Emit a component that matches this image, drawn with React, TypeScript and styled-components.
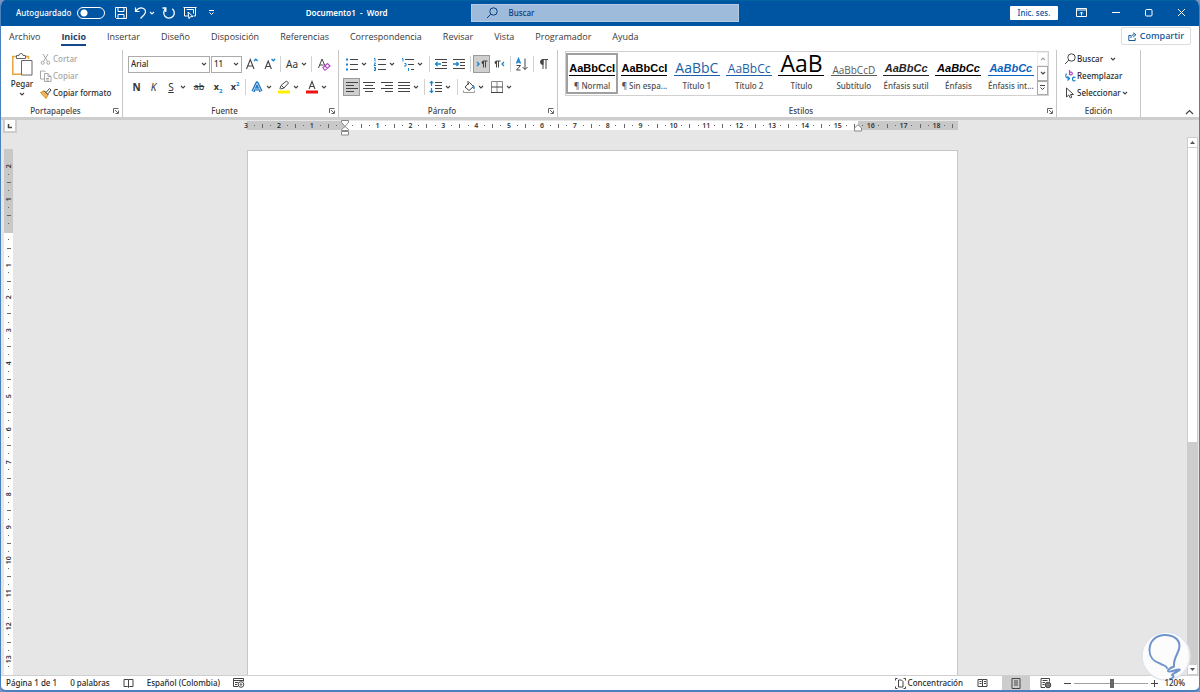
import React from "react";
import styled, { createGlobalStyle, css } from "styled-components";

const BLUE = "#0055a2";
const ACCENT = "#1583d0";
const INK = "#444444";

const GlobalStyle = createGlobalStyle`
  *, *::before, *::after { box-sizing: border-box; }
  body { margin: 0; background: #7f93c2; }
  button, input, select {
    font: inherit;
    color: inherit;
    margin: 0;
    padding: 0;
    border: 0;
    background: none;
    border-radius: 0;
    appearance: none;
  }
  svg { display: block; flex: none; }
`;

const Window = styled.div`
  display: flex;
  flex-direction: column;
  height: 100vh;
  border: 1px solid #4a80bd;
  border-top: 0;
  border-bottom-width: 2px;
  border-radius: 6px;
  overflow: hidden;
  background: #ffffff;
  color: #2b2b2b;
  font-family: "Noto Sans", "Open Sans", sans-serif;
  font-size: 8px;
  line-height: 12px;
  font-weight: 500;
  white-space: nowrap;
`;

/* ---------- title bar ---------- */

const TitleBar = styled.header`
  flex: none;
  display: grid;
  grid-template-columns: 471fr 268px 460fr;
  align-items: center;
  height: 26px;
  padding-bottom: 1px;
  background: ${BLUE};
  box-shadow: inset 0 1px #00629c;
  color: #ffffff;
`;

const QuickAccess = styled.div`
  display: flex;
  align-items: center;
  padding-left: 15px;
`;

const AutoSave = styled.label`
  display: flex;
  align-items: center;
  gap: 5px;
  width: 89px;
  margin-right: 9px;
`;

const Toggle = styled.input`
  width: 28px;
  height: 12px;
  margin-left: auto;
  border: 1px solid #ffffff;
  border-radius: 6px;
  background: radial-gradient(circle at 6px 5px, #ffffff 3px, transparent 4px);
`;

const BarButton = styled.button<{ $w: number }>`
  display: flex;
  align-items: center;
  justify-content: center;
  gap: 2px;
  width: ${(p) => p.$w}px;
  height: 20px;
`;

const DocTitle = styled.div`
  margin-left: auto;
  margin-right: 84px;
  font-weight: 600;
  white-space: pre;
`;

const SearchBox = styled.label`
  display: flex;
  align-items: center;
  gap: 10px;
  height: 18px;
  padding-left: 14px;
  border: 1px solid #b4cae3;
  background: #9fbbdb;
  color: #0a3c7c;
`;

const SearchInput = styled.input`
  flex: 1;
  min-width: 0;
  &::placeholder { color: #0a3c7c; opacity: 1; }
`;

const WindowControls = styled.div`
  display: flex;
  align-items: center;
  justify-content: flex-end;
`;

const SignIn = styled.button`
  width: 48px;
  height: 14px;
  margin-right: 7px;
  border-radius: 1px;
  background: #ffffff;
  color: ${BLUE};
`;

/* ---------- tabs ---------- */

const TabBar = styled.nav`
  flex: none;
  display: flex;
  align-items: flex-start;
  height: 23px;
  padding: 0 8px;
  font-family: "Open Sans", "Noto Sans", sans-serif;
  font-size: 9px;
  font-weight: 400;
`;

const TabList = styled.div`
  flex: 1;
  display: flex;
  gap: 21px;
  padding-top: 4px;
`;

const Tab = styled.button<{ $active?: boolean }>`
  height: 16px;
  line-height: 14px;
  border-bottom: 2px solid ${(p) => (p.$active ? "#124a8c" : "transparent")};
  font-weight: ${(p) => (p.$active ? 700 : 400)};
  color: ${(p) => (p.$active ? "#1f3f66" : "#383838")};
`;

const Share = styled.button`
  display: flex;
  align-items: center;
  justify-content: center;
  gap: 3px;
  width: 70px;
  height: 18px;
  margin-top: 1px;
  border: 1px solid #dcdcdc;
  border-radius: 2px;
  color: #175a9e;
  font-weight: 600;
`;

/* ---------- ribbon ---------- */

const Ribbon = styled.div`
  flex: none;
  display: flex;
  height: 71px;
  padding-top: 1px;
  border-bottom: 3px solid #cdcdcd;
`;

const Group = styled.section<{ $w: number; $pad?: number }>`
  display: flex;
  flex-direction: column;
  width: ${(p) => p.$w}px;
  height: 67px;
  padding-left: ${(p) => p.$pad ?? 0}px;
  border-right: 1px solid #c6c6c6;
`;

const GroupBody = styled.div`
  display: flex;
  flex-direction: column;
  flex: 1;
  gap: 5px;
  padding-top: 5px;
`;

const GroupFoot = styled.div<{ $pad?: number; $launcher: boolean }>`
  display: grid;
  grid-template-columns: 1fr ${(p) => (p.$launcher ? "12px" : "0")};
  align-items: center;
  height: 12px;
  margin-left: -${(p) => p.$pad ?? 0}px;
  text-align: center;
  color: ${INK};
`;

const LauncherButton = styled.button`
  justify-self: end;
  width: 10px;
`;

const Row = styled.div`
  display: flex;
  align-items: center;
  height: 18px;
`;

const Tool = styled.button<{ $w: number; $on?: boolean; $menu?: boolean }>`
  display: flex;
  align-items: center;
  justify-content: ${(p) => (p.$menu ? "flex-start" : "center")};
  gap: 2px;
  flex: none;
  width: ${(p) => p.$w}px;
  height: 18px;
  padding-left: ${(p) => (p.$menu ? 2 : 0)}px;
  color: #333333;
  ${(p) =>
    p.$on &&
    css`
      border: 1px solid #9a9a9a;
      background: #cfcfcf;
    `}
`;

const Glyph = styled.span<{ $bold?: boolean; $italic?: boolean; $line?: string; $size?: number }>`
  min-width: 14px;
  text-align: center;
  font-size: ${(p) => p.$size ?? 10}px;
  font-weight: ${(p) => (p.$bold ? 700 : 400)};
  font-style: ${(p) => (p.$italic ? "italic" : "normal")};
  text-decoration: ${(p) => p.$line ?? "none"};
  sub, sup { font-size: 6px; line-height: 0; color: ${ACCENT}; font-weight: 700; }
`;

const Divider = styled.span`
  flex: none;
  width: 1px;
  height: 16px;
  margin: 0 2px;
  background: #d2d2d2;
`;

const Combo = styled.label<{ $w: number }>`
  display: flex;
  align-items: center;
  width: ${(p) => p.$w}px;
  height: 17px;
  margin-right: 1px;
  padding: 0 2px;
  border: 1px solid #ababab;
`;

const ComboSelect = styled.select`
  flex: 1;
  min-width: 0;
`;

const PlainBody = styled.div`
  display: flex;
  flex: 1;
`;

const Paste = styled.button`
  display: flex;
  flex-direction: column;
  align-items: center;
  gap: 2px;
  width: 39px;
  padding: 3px 0 0 3px;
`;

const Stack = styled.div`
  display: flex;
  flex-direction: column;
  align-items: flex-start;
`;

const LineButton = styled.button<{ $off?: boolean }>`
  display: flex;
  align-items: center;
  gap: 1px;
  height: 17px;
  color: ${(p) => (p.$off ? "#a6a6a6" : "#2b2b2b")};
`;

const Gallery = styled.div`
  display: flex;
  width: 484px;
  height: 45px;
  margin-top: 1px;
  border: 1px solid #d0d0d0;
`;

const StyleGrid = styled.div`
  flex: 1;
  display: grid;
  grid-template-columns: repeat(9, 1fr);
`;

const StyleCard = styled.button<{ $on?: boolean }>`
  display: flex;
  flex-direction: column;
  align-items: center;
  gap: 4px;
  min-width: 0;
  margin: 1px 0;
  border: 2px solid ${(p) => (p.$on ? "#a0a0a0" : "transparent")};
  color: #505050;
`;

const Preview = styled.span<{ $size: number; $color: string; $bold?: boolean; $italic?: boolean }>`
  display: flex;
  flex: none;
  align-items: flex-end;
  justify-content: center;
  width: 46px;
  height: 21px;
  border-bottom: 1px solid ${(p) => p.$color};
  font-family: ${(p) => (p.$bold ? '"Liberation Sans", Arial, sans-serif' : '"Open Sans", sans-serif')};
  font-size: ${(p) => p.$size}px;
  line-height: ${(p) => (p.$bold ? p.$size + 2 : p.$size)}px;
  font-weight: ${(p) => (p.$bold ? 700 : 400)};
  font-style: ${(p) => (p.$italic ? "italic" : "normal")};
  color: ${(p) => p.$color};
`;

const GalleryNav = styled.div`
  display: grid;
  grid-template-rows: repeat(3, 1fr);
  width: 11px;
`;

const GalleryButton = styled.button<{ $off?: boolean }>`
  display: flex;
  align-items: center;
  justify-content: center;
  border: 1px solid ${(p) => (p.$off ? "#dcdcdc" : "#ababab")};
  opacity: ${(p) => (p.$off ? 0.5 : 1)};
`;

const Collapse = styled.button`
  align-self: flex-end;
  margin: 0 5px 2px auto;
`;

/* ---------- work area ---------- */

const WorkArea = styled.main`
  flex: 1;
  min-height: 0;
  display: grid;
  grid-template-columns: 17px 1fr 12px;
  background: #e6e6e6;
`;

const LeftRail = styled.div`
  display: flex;
  flex-direction: column;
  align-items: flex-start;
  min-height: 0;
  padding-left: 2px;
  overflow: hidden;
`;

const TabStop = styled.button`
  display: flex;
  align-items: center;
  justify-content: center;
  flex: none;
  width: 14px;
  height: 13px;
  margin-bottom: 16px;
  border: 2px solid #cdcdcd;
  border-top: 0;
  background: #ffffff;
`;

const VRuler = styled.div`
  flex: 1;
  width: 9px;
  margin-left: 1px;
  padding-top: 13px;
  background: linear-gradient(to bottom, #c8c8c8 84px, #ffffff 84px);
`;

const VMarks = styled.div`
  display: grid;
  grid-template-rows: repeat(62, 1fr);
  height: 509px;
`;

const Mark = styled.span<{ $vertical?: boolean }>`
  display: flex;
  align-items: center;
  justify-content: center;
  min-width: 0;
  min-height: 0;
  font-size: 7px;
  line-height: 8px;
  font-weight: 600;
  color: #333333;
  ${(p) =>
    p.$vertical &&
    css`
      writing-mode: vertical-rl;
      rotate: 180deg;
    `}
`;

const Tick = styled.i<{ $w: number; $h: number }>`
  flex: none;
  width: ${(p) => p.$w}px;
  height: ${(p) => p.$h}px;
  background: #666666;
`;

const Canvas = styled.div`
  display: flex;
  flex-direction: column;
  align-items: center;
  min-width: 0;
  min-height: 0;
`;

const HRuler = styled.div`
  position: relative;
  flex: none;
  width: 711px;
  height: 9px;
  margin: 1px 0 20px;
  background: linear-gradient(to right, #c8c8c8 98px, #ffffff 98px 611px, #c8c8c8 611px);
`;

const HMarks = styled.div`
  display: grid;
  grid-template-columns: repeat(87, 1fr);
  height: 9px;
  margin: 0 1px 0 -5px;
`;

const Indent = styled.svg<{ $x: number; $y: number }>`
  position: absolute;
  left: ${(p) => p.$x}px;
  top: ${(p) => p.$y}px;
`;

const Sheet = styled.article`
  flex: 1;
  width: 711px;
  border: 1px solid #c6c6c6;
  border-bottom: 0;
  background: #ffffff;
`;

const Scrollbar = styled.div`
  display: flex;
  flex-direction: column;
  width: 11px;
  padding-top: 17px;
`;

const ScrollButton = styled.button`
  display: flex;
  align-items: center;
  justify-content: center;
  flex: none;
  height: 11px;
  border: 1px solid #cdcdcd;
  background: #ffffff;
`;

const ScrollTrack = styled.div`
  flex: 1;
  border: 1px solid #cdcdcd;
  border-top: 0;
  background: #cdcdcd;
`;

const ScrollThumb = styled.div`
  height: 57%;
  background: #ffffff;
`;

const Watermark = styled.div`
  position: absolute;
  right: 9px;
  bottom: 9px;
  z-index: 1;
`;

/* ---------- status bar ---------- */

const StatusBar = styled.footer`
  flex: none;
  display: flex;
  align-items: center;
  height: 15px;
  border-top: 1px solid #d0d0d0;
  padding: 0 14px 0 5px;
`;

const StatusLeft = styled.div`
  display: flex;
  align-items: center;
  gap: 13px;
  flex: 1;
`;

const StatusButton = styled.button<{ $w?: number; $on?: boolean }>`
  display: flex;
  align-items: center;
  justify-content: center;
  gap: 2px;
  height: 14px;
  width: ${(p) => (p.$w ? p.$w + "px" : "auto")};
  background: ${(p) => (p.$on ? "#cdcdcd" : "transparent")};
`;

const ZoomSlider = styled.input`
  width: 74px;
  height: 12px;
  background: linear-gradient(#a0a0a0, #a0a0a0) center / 100% 1px no-repeat;
  &::-webkit-slider-thumb {
    appearance: none;
    width: 4px;
    height: 9px;
    background: #666666;
  }
`;

const ZoomValue = styled.button`
  position: relative;
  z-index: 2;
  width: 24px;
  text-align: right;
`;

/* ---------- icons ---------- */

type IconProps = { w?: number; h?: number; children: React.ReactNode; color?: string };
const Icon = ({ w = 14, h = 14, children, color = "#444444" }: IconProps) => (
  <svg width={w} height={h} viewBox={`0 0 ${w} ${h}`} fill="none" stroke={color} aria-hidden="true">
    {children}
  </svg>
);

const Chevron = ({ color = INK, up = false, w = 6 }: { color?: string; up?: boolean; w?: number }) => (
  <svg width={w} height="4" viewBox="0 0 6 4" fill="none" stroke={color} strokeWidth="1.1" aria-hidden="true">
    <path d={up ? "M1 3 3 1 5 3" : "M1 1 3 3 5 1"} />
  </svg>
);

const Launcher = () => (
  <LauncherButton aria-label="Más opciones">
    <Icon w={8} h={8} color="#666666">
      <path d="M1.500 6V1.500H6.500M3 3l3 3M6.500 3.500v3h-3" />
    </Icon>
  </LauncherButton>
);

const Magnifier = ({ color = INK, s = 12 }) => (
  <svg width={s} height={s} viewBox="0 0 12 12" fill="none" stroke={color} aria-hidden="true">
    <circle cx="7.500" cy="4.500" r="3.700" />
    <path d="M4.800 7.200 1 11" />
  </svg>
);

const lines = (rows: [number, number, number][]) => rows.map(([x1, x2, y]) => `M${x1} ${y}H${x2}`).join("");

const Foot = ({ title, pad, launcher = true }: { title: string; pad?: number; launcher?: boolean }) => (
  <GroupFoot $pad={pad} $launcher={launcher}>
    <span>{title}</span>
    {launcher && <Launcher />}
  </GroupFoot>
);

/* ---------- data ---------- */

const TABS = [
  "Archivo", "Inicio", "Insertar", "Diseño", "Disposición", "Referencias",
  "Correspondencia", "Revisar", "Vista", "Programador", "Ayuda",
];

const STYLES = [
  { name: "¶ Normal", text: "AaBbCcI", size: 11, color: "#000000", bold: true },
  { name: "¶ Sin espa...", text: "AaBbCcI", size: 11, color: "#000000", bold: true },
  { name: "Título 1", text: "AaBbC", size: 14, color: "#1c5fa8" },
  { name: "Título 2", text: "AaBbCc", size: 12, color: "#1c5fa8" },
  { name: "Título", text: "AaB", size: 23, color: "#000000" },
  { name: "Subtítulo", text: "AaBbCcD", size: 10, color: "#5a5a5a" },
  { name: "Énfasis sutil", text: "AaBbCc", size: 11, color: "#262626", bold: true, italic: true },
  { name: "Énfasis", text: "AaBbCc", size: 11, color: "#000000", bold: true, italic: true },
  { name: "Énfasis int...", text: "AaBbCc", size: 11, color: "#0b63c0", bold: true, italic: true },
];

const HMark = ({ quarter }: { quarter: number }) => {
  const q = Math.abs(quarter);
  if (q && q % 4 === 0) return <Mark>{q / 4}</Mark>;
  return <Mark>{q === 0 ? null : q % 2 === 0 ? <Tick $w={1} $h={4} /> : <Tick $w={1} $h={1} />}</Mark>;
};

const VMark = ({ quarter }: { quarter: number }) => {
  const q = Math.abs(quarter);
  if (q && q % 4 === 0) return <Mark $vertical>{q / 4}</Mark>;
  return <Mark>{q === 0 ? null : q % 2 === 0 ? <Tick $w={4} $h={1} /> : <Tick $w={1} $h={1} />}</Mark>;
};

export default function App() {
  return (
    <>
      <GlobalStyle />
      <Window>
        <TitleBar>
          <QuickAccess>
            <AutoSave>
              Autoguardado
              <Toggle type="checkbox" />
            </AutoSave>
            <BarButton $w={14} aria-label="Guardar">
              <Icon w={14} h={14} color="#ffffff">
                <path d="M1.500 1.500h11v11h-10l-1-1zM4 1.500v4h6v-4M4 12.500v-4h6v4" />
              </Icon>
            </BarButton>
            <BarButton $w={32} aria-label="Deshacer">
              <Icon w={13} color="#ffffff">
                <path strokeWidth="1.200" d="M1.500 1.500v4h4M1.800 5.200C4 2.200 7 1.200 9.500 2.500s2.500 4 .8 6L6.500 12.500" />
              </Icon>
              <Chevron color="#ffffff" />
            </BarButton>
            <BarButton $w={17} aria-label="Rehacer">
              <Icon color="#ffffff">
                <path strokeWidth="1.300" d="M4 2.500A5.300 5.300 0 1 0 10.300 2.700M3.800 6V2H.5" />
              </Icon>
            </BarButton>
            <BarButton $w={26} aria-label="Presentación">
              <Icon color="#ffffff">
                <path d="M.5 1.500h13M1.500 1.500v8.500h3.500M12.500 1.500v8.500h-2M3.500 3.500h7v4M5 6l5 4.500-2.500.2-1.500 2z" />
              </Icon>
            </BarButton>
            <BarButton $w={17} aria-label="Personalizar barra">
              <Icon w={7} h={7} color="#ffffff">
                <path d="M1 1.500h5M1.500 3.500l2 2 2-2" />
              </Icon>
            </BarButton>
            <DocTitle>{"Documento1  -  Word"}</DocTitle>
          </QuickAccess>
          <SearchBox>
            <Magnifier color="#0a3c7c" />
            <SearchInput placeholder="Buscar" aria-label="Buscar" />
          </SearchBox>
          <WindowControls>
            <SignIn>Inic. ses.</SignIn>
            <BarButton $w={34} aria-label="Opciones de la cinta">
              <Icon w={11} h={9} color="#ffffff">
                <path d="M.5.5h10v8H.5zM.5 2h10M5.500 7.500V4M4 5.500 5.500 4 7 5.500" />
              </Icon>
            </BarButton>
            <BarButton $w={33} aria-label="Minimizar">
              <Icon w={9} h={9} color="#ffffff"><path d="M1 4.500h8" /></Icon>
            </BarButton>
            <BarButton $w={33} aria-label="Maximizar">
              <Icon w={9} h={9} color="#ffffff"><rect x="1.500" y="1.500" width="6.500" height="6.500" rx="1" /></Icon>
            </BarButton>
            <BarButton $w={34} aria-label="Cerrar">
              <Icon w={9} h={9} color="#ffffff"><path d="M1 1l7 7M8 1 1 8" /></Icon>
            </BarButton>
          </WindowControls>
        </TitleBar>

        <TabBar>
          <TabList>
            {TABS.map((t) => (
              <Tab key={t} $active={t === "Inicio"}>{t}</Tab>
            ))}
          </TabList>
          <Share>
            <Icon w={9} h={9} color="#175a9e">
              <path d="M3 3.500H.8v5h6.400V6M2.800 6c.2-2.200 1.400-3.300 3.500-3.300M5.200.8 8 2.700 5.200 5" />
            </Icon>
            Compartir
          </Share>
        </TabBar>

        <Ribbon>
          <Group $w={122}>
            <PlainBody>
              <Paste>
                <Icon w={22} h={23}>
                  <path stroke="#e8a33d" strokeWidth="1.500" d="M5 3.500H1.800v17.700H10M15 3.500h2.500V6" />
                  <path d="M5.500 5.500v-3H8a2 2 0 0 1 4 0h2.500v3z" fill="#fff" stroke="#666" />
                  <path d="M10.500 7.500h10.500v14.500H10.500z" fill="#fff" stroke="#666" />
                </Icon>
                Pegar
                <Chevron />
              </Paste>
              <Stack>
                <LineButton $off>
                  <Icon w={12} h={12} color="#a6a6a6">
                    <path d="M3 1l4.500 7.500M8 1 3.500 8.500" />
                    <circle cx="2.700" cy="9.800" r="1.500" /><circle cx="8.300" cy="9.800" r="1.500" />
                  </Icon>
                  Cortar
                </LineButton>
                <LineButton $off>
                  <Icon w={12} h={12} color="#a6a6a6">
                    <path d="M4.500 9H.5V1h4l1 1M4.500 3.500H8l3 3v5H4.500zM8 3.500v3h3M6 8.500h3M6 10h3" />
                  </Icon>
                  Copiar
                </LineButton>
                <LineButton>
                  <Icon w={12} h={12}>
                    <path d="M.5 5.500 4 4l4 4-2 3.500z" fill="#f0b75c" stroke="#d4912e" />
                    <path d="M4 3.500l4.500 4.500M6 5.500 9.500 1.500l1.500 1.500L8 6.800" fill="#fff" />
                  </Icon>
                  Copiar formato
                </LineButton>
              </Stack>
            </PlainBody>
            <Foot title="Portapapeles" />
          </Group>

          <Group $w={216} $pad={5}>
            <GroupBody>
              <Row>
                <Combo $w={82}>
                  <ComboSelect aria-label="Fuente"><option>Arial</option></ComboSelect>
                  <Chevron />
                </Combo>
                <Combo $w={31}>
                  <ComboSelect aria-label="Tamaño de fuente"><option>11</option></ComboSelect>
                  <Chevron />
                </Combo>
                <Tool $w={18} aria-label="Aumentar fuente">
                  <Icon>
                    <path strokeWidth="1.100" d="M1.500 12 5.300 2.500 9 12M2.800 9h5" />
                    <path stroke={ACCENT} strokeWidth="1.300" d="M9 4l1.800-1.800L12.600 4" />
                  </Icon>
                </Tool>
                <Tool $w={17} aria-label="Reducir fuente">
                  <Icon>
                    <path strokeWidth="1.100" d="M2 12l3.200-8 3.200 8M3.200 9.500h4" />
                    <path stroke={ACCENT} strokeWidth="1.300" d="M8.500 2l1.800 1.800L12.100 2" />
                  </Icon>
                </Tool>
                <Divider />
                <Tool $w={26} $menu aria-label="Cambiar mayúsculas"><Glyph>Aa</Glyph><Chevron /></Tool>
                <Divider />
                <Tool $w={20} aria-label="Borrar formato">
                  <Icon>
                    <path d="M1.500 11 5 2l3 7M2.500 8h4" />
                    <path stroke="#b146c2" strokeWidth="1.200" d="M6 10.500l4.500-4 2.500 2.500-4.500 4H7.500zM8 9l2.500 2.500" />
                  </Icon>
                </Tool>
              </Row>
              <Row>
                <Tool $w={17} aria-label="Negrita"><Glyph $bold>N</Glyph></Tool>
                <Tool $w={17} aria-label="Cursiva"><Glyph $italic>K</Glyph></Tool>
                <Tool $w={27} $menu aria-label="Subrayado"><Glyph $line="underline">S</Glyph><Chevron /></Tool>
                <Tool $w={20} aria-label="Tachado"><Glyph $line="line-through" $size={9}>ab</Glyph></Tool>
                <Tool $w={18} aria-label="Subíndice"><Glyph $size={9} $bold>x<sub>2</sub></Glyph></Tool>
                <Tool $w={16} aria-label="Superíndice"><Glyph $size={9} $bold>x<sup>2</sup></Glyph></Tool>
                <Divider />
                <Tool $w={27} $menu aria-label="Efectos de texto">
                  <Icon>
                    <path stroke="#1a74c4" strokeWidth="3.200" strokeLinejoin="round" d="M3 11.500 7 3l4 8.500M4.500 9h5" />
                    <path stroke="#d9ecfa" strokeWidth=".8" d="M3 11.500 7 3l4 8.500M4.500 9h5" />
                  </Icon>
                  <Chevron />
                </Tool>
                <Tool $w={28} $menu aria-label="Color de resaltado">
                  <Icon>
                    <path d="M3 8.500l1-3L9.500 1l2 2L7 8l-3.500 1zM4.500 5.500 7 8" />
                    <path stroke="#ffee00" strokeWidth="3" d="M1 12h12" />
                  </Icon>
                  <Chevron />
                </Tool>
                <Tool $w={27} $menu aria-label="Color de fuente">
                  <Icon>
                    <path strokeWidth="1.100" d="M4 9l3-7.500L10 9M5 6.500h4" />
                    <path stroke="#ee1111" strokeWidth="3" d="M1 12h12" />
                  </Icon>
                  <Chevron />
                </Tool>
              </Row>
            </GroupBody>
            <Foot title="Fuente" pad={5} />
          </Group>

          <Group $w={219} $pad={4}>
            <GroupBody>
              <Row>
                <Tool $w={28} $menu aria-label="Viñetas">
                  <Icon>
                    <path d={lines([[5, 13, 2.5], [5, 13, 7.5], [5, 13, 12.5]])} />
                    <path stroke={ACCENT} strokeWidth="2" d={lines([[1, 3, 2.5], [1, 3, 7.5], [1, 3, 12.5]])} />
                  </Icon>
                  <Chevron />
                </Tool>
                <Tool $w={28} $menu aria-label="Numeración">
                  <Icon>
                    <path d={lines([[5, 13, 2.5], [5, 13, 7.5], [5, 13, 12.5]])} />
                    <path stroke={ACCENT} d="M1 1.500h1v3M1 6h1.500L1 8.500h2M1 10.500h1.500v3H1M1 12h1.500" />
                  </Icon>
                  <Chevron />
                </Tool>
                <Tool $w={28} $menu aria-label="Lista multinivel">
                  <Icon>
                    <path d={lines([[4, 13, 2.5], [7, 13, 7.5], [10, 13, 12.5]])} />
                    <path stroke={ACCENT} d="M1 1.500h1v3M3.500 6.500h1.500v2.500h-2M7.500 11v3" />
                  </Icon>
                  <Chevron />
                </Tool>
                <Divider />
                <Tool $w={18} aria-label="Disminuir sangría">
                  <Icon>
                    <path d={lines([[1, 13, 2.5], [8, 13, 5.5], [8, 13, 8.5], [1, 13, 11.5]])} />
                    <path stroke={ACCENT} strokeWidth="1.300" d="M7 7H1.500M3.500 5l-2 2 2 2" />
                  </Icon>
                </Tool>
                <Tool $w={18} aria-label="Aumentar sangría">
                  <Icon>
                    <path d={lines([[1, 13, 2.5], [8, 13, 5.5], [8, 13, 8.5], [1, 13, 11.5]])} />
                    <path stroke={ACCENT} strokeWidth="1.300" d="M1 7h5.500M4.500 5l2 2-2 2" />
                  </Icon>
                </Tool>
                <Divider />
                <Tool $w={17} $on aria-label="De izquierda a derecha">
                  <Icon>
                    <path stroke={ACCENT} strokeWidth="1.300" d="M2 5l2 2-2 2" />
                    <path d="M8.500 10.500V4h4M10.500 4v6.500" />
                    <path d="M8.500 4a1.500 1.500 0 0 0 0 3z" fill={INK} />
                  </Icon>
                </Tool>
                <Tool $w={18} aria-label="De derecha a izquierda">
                  <Icon>
                    <path stroke={ACCENT} strokeWidth="1.300" d="M12 5l-2 2 2 2" />
                    <path d="M4.500 10.500V4h4M6.500 4v6.500" />
                    <path d="M4.500 4a1.500 1.500 0 0 0 0 3z" fill={INK} />
                  </Icon>
                </Tool>
                <Divider />
                <Tool $w={18} aria-label="Ordenar">
                  <Icon>
                    <path stroke={ACCENT} strokeWidth="1.300" d="M1.500 6.500l2-5 2 5M2.200 5h2.600" />
                    <path d="M1.500 8.500h4l-4 4.500h4M10 1.500v11M7.500 10l2.500 2.500L12.500 10" />
                  </Icon>
                </Tool>
                <Divider />
                <Tool $w={16} aria-label="Mostrar todo">
                  <Icon>
                    <path d="M6 12V2.500h5M9 2.500V12" />
                    <path d="M6 2.500a2.300 2.300 0 0 0 0 5z" fill={INK} />
                  </Icon>
                </Tool>
              </Row>
              <Row>
                <Tool $w={17} $on aria-label="Alinear a la izquierda">
                  <Icon><path d={lines([[1, 13, 2.5], [1, 9, 5.5], [1, 13, 8.5], [1, 9, 11.5]])} /></Icon>
                </Tool>
                <Tool $w={18} aria-label="Centrar">
                  <Icon><path d={lines([[1, 13, 2.5], [3, 11, 5.5], [1, 13, 8.5], [3, 11, 11.5]])} /></Icon>
                </Tool>
                <Tool $w={17} aria-label="Alinear a la derecha">
                  <Icon><path d={lines([[1, 13, 2.5], [5, 13, 5.5], [1, 13, 8.5], [5, 13, 11.5]])} /></Icon>
                </Tool>
                <Tool $w={27} $menu aria-label="Justificar">
                  <Icon><path d={lines([[1, 13, 2.5], [1, 13, 5.5], [1, 13, 8.5], [1, 13, 11.5]])} /></Icon>
                  <Chevron />
                </Tool>
                <Divider />
                <Tool $w={28} $menu aria-label="Interlineado">
                  <Icon>
                    <path d={lines([[6, 13, 2.5], [6, 13, 5.5], [6, 13, 8.5], [6, 13, 11.5]])} />
                    <path stroke={ACCENT} strokeWidth="1.200" d="M2.500 1.500v4.500M.8 3.200l1.700-1.700 1.700 1.700M2.500 8v4.500M.8 10.800l1.700 1.700 1.700-1.700" />
                  </Icon>
                  <Chevron />
                </Tool>
                <Divider />
                <Tool $w={28} $menu aria-label="Sombreado">
                  <Icon>
                    <path d="M3 7l4.500-4.500 4 4L7 10.500zM6 1v4" />
                    <path stroke={ACCENT} strokeWidth="1.500" d="M11 5.500q1.500 1.500 1 3.500" />
                    <path stroke="#999" d="M1.500 10.500v2h11v-2" />
                  </Icon>
                  <Chevron />
                </Tool>
                <Tool $w={28} $menu aria-label="Bordes">
                  <Icon>
                    <path stroke="#888" d="M1.500 1.500h11v10.500M1.500 1.500v10.500M7 1.500V12" />
                    <path d="M1.500 7h11M1 12.500h12" />
                  </Icon>
                  <Chevron />
                </Tool>
              </Row>
            </GroupBody>
            <Foot title="Párrafo" pad={4} />
          </Group>

          <Group $w={499} $pad={7}>
            <PlainBody>
              <Gallery>
                <StyleGrid>
                  {STYLES.map((s, i) => (
                    <StyleCard key={s.name} $on={i === 0}>
                      <Preview $size={s.size} $color={s.color} $bold={s.bold} $italic={s.italic}>{s.text}</Preview>
                      <span>{s.name}</span>
                    </StyleCard>
                  ))}
                </StyleGrid>
                <GalleryNav>
                  <GalleryButton $off aria-label="Fila anterior"><Chevron up /></GalleryButton>
                  <GalleryButton aria-label="Fila siguiente"><Chevron /></GalleryButton>
                  <GalleryButton aria-label="Más estilos">
                    <Icon w={7} h={7}><path d="M1 1.500h5M1.500 3.500l2 2 2-2" /></Icon>
                  </GalleryButton>
                </GalleryNav>
              </Gallery>
            </PlainBody>
            <Foot title="Estilos" pad={7} />
          </Group>

          <Group $w={84} $pad={7}>
            <PlainBody>
              <Stack>
                <LineButton>
                  <Magnifier />
                  Buscar
                  <Icon w={14} h={4}><path strokeWidth="1.100" d="M7 1l2 2 2-2" /></Icon>
                </LineButton>
                <LineButton>
                  <Icon w={12} h={12}>
                    <path stroke="#b146c2" strokeWidth="1.200" d="M5.500 0v5M5.500 3.500a1.400 1.400 0 1 1 0 .1" />
                    <path stroke={ACCENT} strokeWidth="1.200" d="M2.500 3.500q-2.500 4 2.500 5M3.500 6.500l2 2-2 2M11.500 7.500q-3-1-3 1.500t3 1.500" />
                  </Icon>
                  Reemplazar
                </LineButton>
                <LineButton>
                  <Icon w={12} h={12}><path d="M2.500 1v9l2.300-2 1.500 3 1.500-.8L6.500 7.500h3z" /></Icon>
                  Seleccionar
                  <Chevron />
                </LineButton>
              </Stack>
            </PlainBody>
            <Foot title="Edición" pad={7} launcher={false} />
          </Group>
          <Collapse aria-label="Contraer la cinta">
            <Icon w={9} h={6}><path strokeWidth="1.200" d="M1 5l3.500-3.500L8 5" /></Icon>
          </Collapse>
        </Ribbon>

        <WorkArea>
          <LeftRail>
            <TabStop aria-label="Tabulación izquierda">
              <Icon w={6} h={6}><path strokeWidth="1.500" d="M1.500 1v3.500H5" /></Icon>
            </TabStop>
            <VRuler>
              <VMarks>
                {Array.from({ length: 62 }, (_, i) => <VMark key={i} quarter={i - 8} />)}
              </VMarks>
            </VRuler>
          </LeftRail>

          <Canvas>
            <HRuler>
              <HMarks>
                {Array.from({ length: 87 }, (_, i) => <HMark key={i} quarter={i - 12} />)}
              </HMarks>
              <Indent $x={94} $y={-1} width="8" height="16" viewBox="0 0 8 16" fill="#fff" stroke="#888">
                <path d="M.5.5h7v2L4 6.500.5 2.500zM4 6.500l3.500 3v1H.5v-1zM.5 11.500h7v3.500h-7z" />
              </Indent>
              <Indent $x={607} $y={3} width="8" height="8" viewBox="0 0 8 8" fill="#fff" stroke="#888">
                <path d="M4 .7 7.500 4v3H.5V4z" />
              </Indent>
            </HRuler>
            <Sheet />
          </Canvas>

          <Scrollbar>
            <ScrollButton aria-label="Subir">
              <svg width="5" height="3"><path d="M0 3 2.500 0 5 3z" fill="#555" /></svg>
            </ScrollButton>
            <ScrollTrack><ScrollThumb /></ScrollTrack>
            <ScrollButton aria-label="Bajar">
              <svg width="5" height="3"><path d="M0 0 2.500 3 5 0z" fill="#555" /></svg>
            </ScrollButton>
          </Scrollbar>
        </WorkArea>

        <StatusBar>
          <StatusLeft>
            <StatusButton>Página 1 de 1</StatusButton>
            <StatusButton>0 palabras</StatusButton>
            <StatusButton aria-label="Revisión">
              <Icon w={11} h={10}><path d="M5.500 9V1.500H1v7h3.500l1 1 1-1H10v-7H5.500" /></Icon>
            </StatusButton>
            <StatusButton>Español (Colombia)</StatusButton>
            <StatusButton aria-label="Macros">
              <Icon w={12} h={10}>
                <path d="M5 8.500H.5v-8h10v3M.5 2.500h10M2 4.500h3M2 6.500h2" />
                <circle cx="8" cy="6.500" r="2.800" /><circle cx="8" cy="6.500" r=".8" />
              </Icon>
            </StatusButton>
          </StatusLeft>
          <StatusButton>
            <Icon w={11} h={11}>
              <path d="M2.500.5h-2v2M8.500.5h2v2M.5 8.500v2h2M10.500 8.500v2h-2M3.500 2h3l1.500 1.500V9H3.500z" />
            </Icon>
            Concentración
          </StatusButton>
          <StatusButton $w={39} aria-label="Modo de lectura">
            <Icon w={11} h={10}><path d="M5.500 9V1.500H1v7h9v-7H5.500M2.500 3.500h2M2.500 5.500h2M7 3.500h2M7 5.500h2" /></Icon>
          </StatusButton>
          <StatusButton $w={28} $on aria-label="Diseño de impresión">
            <Icon w={10} h={11}><path d="M1 .5h8v10H1zM3 3h4M3 5h4M3 7h4" /></Icon>
          </StatusButton>
          <StatusButton $w={31} aria-label="Diseño web">
            <Icon w={12} h={11}>
              <path d="M5 9.500H1V.5h8.500v3M2.500 2.500h5M2.500 4.500h2.500M2.500 6.500h2" />
              <circle cx="8" cy="7" r="2.800" fill="#777" />
            </Icon>
          </StatusButton>
          <StatusButton $w={13} aria-label="Alejar"><Icon w={7} h={7}><path d="M0 3.500h7" /></Icon></StatusButton>
          <ZoomSlider type="range" min={0} max={100} defaultValue={52} aria-label="Zoom" />
          <StatusButton $w={13} aria-label="Acercar"><Icon w={7} h={7}><path d="M0 3.500h7M3.500 0v7" /></Icon></StatusButton>
          <ZoomValue>120%</ZoomValue>
        </StatusBar>

        <Watermark>
          <svg width="50" height="52" viewBox="0 0 50 52" fill="none" aria-hidden="true">
            <circle cx="25" cy="25" r="24" fill="#ffffff" fillOpacity="0.88" stroke="#dfe4ec" strokeWidth="1.500" />
            <path
              d="M26 37C25 34 22 34.500 20 33C14 31 8.500 28 8.500 19C8.500 9 16 4 24 4C32 4 38.500 8 38.500 15C38.500 22 32 26 33 35.500C30 36.500 26.500 38.500 27 40C28 42 36 38 38.500 38.500C40 39.500 32 42 31 44C33 45 34 46 29 48"
              stroke="#6f93ca"
              strokeWidth="2"
              strokeLinecap="round"
              strokeLinejoin="round"
            />
          </svg>
        </Watermark>
      </Window>
    </>
  );
}
